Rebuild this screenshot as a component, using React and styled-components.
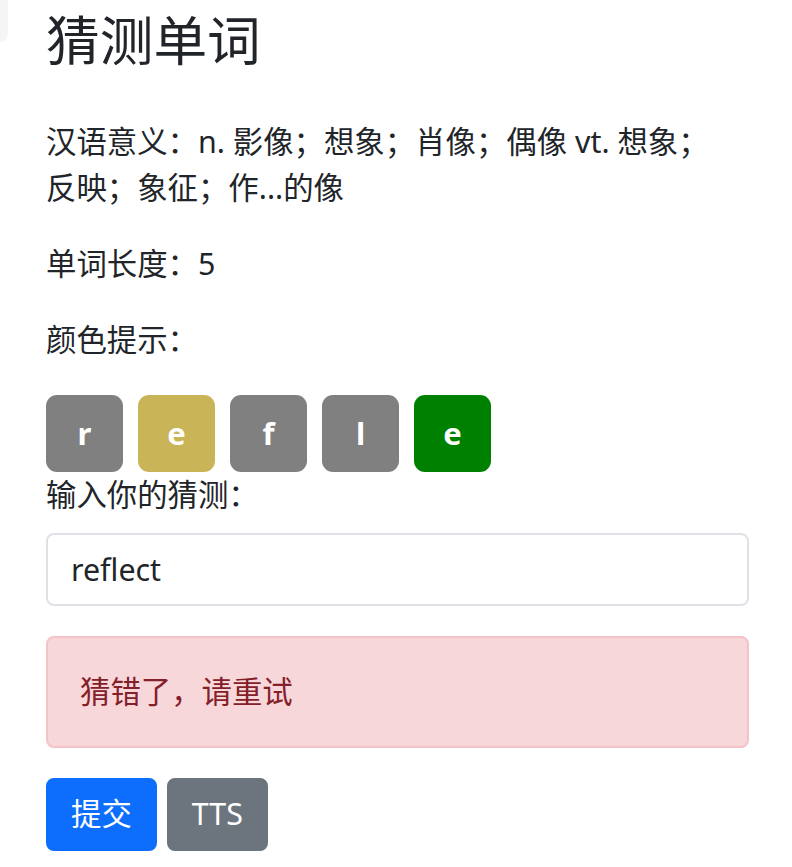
import React, { useState } from 'react'
import styled, { createGlobalStyle } from 'styled-components'

const GlobalStyle = createGlobalStyle`
  * {
    box-sizing: border-box;
  }
  body {
    margin: 0;
    background: #fff;
    color: #212529;
    font-family: "Noto Sans", "Noto Sans CJK SC", sans-serif;
    font-size: 30.4px;
    line-height: 1.5;
  }
`

const Page = styled.div`
  display: flex;
  align-items: flex-start;
`

const EdgeTab = styled.div`
  width: 8px;
  height: 42px;
  flex-shrink: 0;
  background: #f4f5f6;
  border-bottom-right-radius: 8px;
`

const Container = styled.div`
  flex: 1;
  padding: 9px 43px 0 38px;
`

const Title = styled.h1`
  margin: 0 0 45.6px;
  font-size: 53.7px;
  font-weight: 400;
  line-height: 1.2;
`

const Para = styled.p`
  margin: 0 0 30.4px;
  max-width: ${(p) => p.$maxWidth || 'none'};
`

const Tiles = styled.div`
  display: flex;
  gap: 15px;
  margin-top: 33px;
`

const TILE_COLORS = {
  absent: '#808080',
  present: '#c9b458',
  correct: '#008000',
}

const Tile = styled.div`
  width: 77px;
  height: 77px;
  border-radius: 11px;
  background: ${(p) => TILE_COLORS[p.$state]};
  color: #fff;
  display: flex;
  align-items: center;
  justify-content: center;
  font-weight: 700;
  font-size: 31px;
  line-height: 1;
`

const Label = styled.label`
  display: block;
  margin-bottom: 15.2px;
`

const Input = styled.input`
  display: block;
  width: 100%;
  height: 73px;
  padding: 0 23px;
  font: inherit;
  color: #212529;
  border: 2px solid #dee2e6;
  border-radius: 8px;
  margin-bottom: 30.4px;
  outline: none;
`

const Alert = styled.div`
  padding: 31px 32px;
  border: 2px solid #f5c2c7;
  border-radius: 8px;
  background: #f8d7da;
  color: #842029;
  margin-bottom: 29.5px;
`

const Buttons = styled.div`
  display: flex;
  gap: 10px;
`

const Button = styled.button`
  height: 73px;
  padding: 0 23px;
  font: inherit;
  color: #fff;
  border: 2px solid ${(p) => (p.$variant === 'primary' ? '#0d6efd' : '#6c757d')};
  background: ${(p) => (p.$variant === 'primary' ? '#0d6efd' : '#6c757d')};
  border-radius: 8px;
  cursor: pointer;
`

const hints = [
  { letter: 'r', state: 'absent' },
  { letter: 'e', state: 'present' },
  { letter: 'f', state: 'absent' },
  { letter: 'l', state: 'absent' },
  { letter: 'e', state: 'correct' },
]

const App = () => {
  const [guess, setGuess] = useState('reflect')

  return (
    <>
      <GlobalStyle />
      <Page>
        <EdgeTab />
        <Container>
          <Title>猜测单词</Title>
          <Para $maxWidth="680px">汉语意义：n. 影像；想象；肖像；偶像 vt. 想象；反映；象征；作...的像</Para>
          <Para>单词长度：5</Para>
          <Para>颜色提示：</Para>
          <Tiles>
            {hints.map((h, i) => (
              <Tile key={i} $state={h.state}>
                {h.letter}
              </Tile>
            ))}
          </Tiles>
          <Label htmlFor="guess">输入你的猜测：</Label>
          <Input id="guess" value={guess} onChange={(e) => setGuess(e.target.value)} />
          <Alert>猜错了，请重试</Alert>
          <Buttons>
            <Button $variant="primary">提交</Button>
            <Button $variant="secondary">TTS</Button>
          </Buttons>
        </Container>
      </Page>
    </>
  )
}

export default App
